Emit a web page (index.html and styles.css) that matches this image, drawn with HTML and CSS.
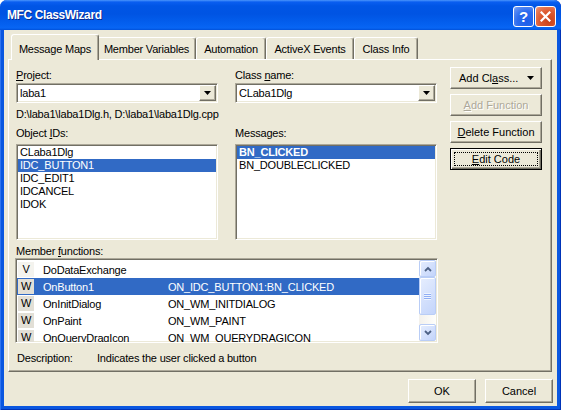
FILE: index.html
```html
<!DOCTYPE html>
<html lang="en">
<head>
    <meta charset="UTF-8">
    <meta name="viewport" content="width=device-width, initial-scale=1.0">
    <title>MFC ClassWizard</title>
    <link rel="stylesheet" href="styles.css">
</head>
<body>
    <div class="window">
        <div class="titlebar">
            <span class="title">MFC ClassWizard</span>
            <div class="title-buttons">
                <span class="tbtn help">?</span>
                <span class="tbtn close">
                    <svg width="11" height="11" viewBox="0 0 11 11"><path d="M1.5 1.5l8 8M9.5 1.5l-8 8" stroke="#fff" stroke-width="2.2" stroke-linecap="square"/></svg>
                </span>
            </div>
        </div>
        <div class="client">
            <div class="tabs">
                <div class="tab tab-msg active">Message Maps</div>
                <div class="tab tab-var">Member Variables</div>
                <div class="tab tab-auto">Automation</div>
                <div class="tab tab-ax">ActiveX Events</div>
                <div class="tab tab-info">Class Info</div>
            </div>
            <div class="panel">
                <div class="main">
                    <div class="cols">
                        <div class="field">
                            <div class="label"><u>P</u>roject:</div>
                            <div class="combo">
                                <span class="combo-text">laba1</span>
                                <span class="drop"><svg width="7" height="4" viewBox="0 0 7 4"><path d="M0 0h7L3.5 4z" fill="#000"/></svg></span>
                            </div>
                        </div>
                        <div class="field">
                            <div class="label">Class <u>n</u>ame:</div>
                            <div class="combo">
                                <span class="combo-text">CLaba1Dlg</span>
                                <span class="drop"><svg width="7" height="4" viewBox="0 0 7 4"><path d="M0 0h7L3.5 4z" fill="#000"/></svg></span>
                            </div>
                        </div>
                    </div>
                    <div class="path">D:\laba1\laba1Dlg.h, D:\laba1\laba1Dlg.cpp</div>
                    <div class="cols lists">
                        <div class="field">
                            <div class="label">Object <u>I</u>Ds:</div>
                            <ul class="listbox">
                                <li>CLaba1Dlg</li>
                                <li class="selected">IDC_BUTTON1</li>
                                <li>IDC_EDIT1</li>
                                <li>IDCANCEL</li>
                                <li>IDOK</li>
                            </ul>
                        </div>
                        <div class="field">
                            <div class="label">Messages:</div>
                            <ul class="listbox">
                                <li class="selected bold">BN_CLICKED</li>
                                <li>BN_DOUBLECLICKED</li>
                            </ul>
                        </div>
                    </div>
                    <div class="label funcs-label">Member <u>f</u>unctions:</div>
                    <div class="listview">
                        <div class="rows">
                            <div class="row"><span class="icon icon-v">V</span><span class="fn">DoDataExchange</span><span class="map"></span></div>
                            <div class="row selected"><span class="icon">W</span><span class="fn">OnButton1</span><span class="map">ON_IDC_BUTTON1:BN_CLICKED</span></div>
                            <div class="row"><span class="icon">W</span><span class="fn">OnInitDialog</span><span class="map">ON_WM_INITDIALOG</span></div>
                            <div class="row"><span class="icon">W</span><span class="fn">OnPaint</span><span class="map">ON_WM_PAINT</span></div>
                            <div class="row"><span class="icon">W</span><span class="fn">OnQueryDragIcon</span><span class="map">ON_WM_QUERYDRAGICON</span></div>
                        </div>
                        <div class="scrollbar">
                            <div class="sb-btn"><svg width="8" height="6" viewBox="0 0 8 6"><path d="M1 5l3-3 3 3" fill="none" stroke="#4d6185" stroke-width="1.8"/></svg></div>
                            <div class="sb-thumb"><span class="grip"></span></div>
                            <div class="sb-track"></div>
                            <div class="sb-btn"><svg width="8" height="6" viewBox="0 0 8 6"><path d="M1 1l3 3 3-3" fill="none" stroke="#4d6185" stroke-width="1.8"/></svg></div>
                        </div>
                    </div>
                    <div class="desc"><span class="desc-label">Description:</span>Indicates the user clicked a button</div>
                </div>
                <div class="actions">
                    <button class="btn btn-add"><span>Add Cl<u>a</u>ss...</span><svg width="7" height="4" viewBox="0 0 7 4"><path d="M0 0h7L3.5 4z" fill="#000"/></svg></button>
                    <button class="btn" disabled><u>A</u>dd Function</button>
                    <button class="btn"><u>D</u>elete Function</button>
                    <button class="btn default"><span class="focus"><u>E</u>dit Code</span></button>
                </div>
            </div>
            <div class="footer">
                <button class="btn footer-btn">OK</button>
                <button class="btn footer-btn">Cancel</button>
            </div>
        </div>
    </div>
</body>
</html>
```

FILE: styles.css
```css
* {
    box-sizing: border-box;
}
body {
    margin: 0;
    font-family: "Liberation Sans", Arial, sans-serif;
    font-size: 11px;
    letter-spacing: -0.2px;
    color: #000;
    background: #fff;
}
.window {
    width: 561px;
    height: 410px;
    display: flex;
    flex-direction: column;
    background: #0a57e0;
    border-radius: 7px 7px 0 0;
    box-shadow: inset 1px 0 #2f74f0, inset -1px 0 #0034b8, inset 0 -1px #0034b8;
    overflow: hidden;
}
.titlebar {
    height: 30px;
    display: flex;
    justify-content: space-between;
    align-items: flex-start;
    padding: 6px 5px 0 7px;
    background: linear-gradient(#4b95fb 0, #0a5ef0 2px, #0055e5 6px, #0054e3 14px, #0460ef 24px, #0866f4 28px, #0051da 30px);
    border-radius: 7px 7px 0 0;
}
.title {
    margin-top: 2px;
    font-weight: bold;
    font-size: 12px;
    line-height: 15px;
    letter-spacing: -0.4px;
    color: #fff;
    text-shadow: 1px 1px #0b2a8c;
}
.title-buttons {
    display: flex;
    gap: 1px;
}
.tbtn {
    width: 21px;
    height: 21px;
    display: flex;
    align-items: center;
    justify-content: center;
    border: 1px solid #fff;
    border-radius: 3px;
    color: #fff;
    font-weight: bold;
    font-size: 15px;
    letter-spacing: 0;
}
.help {
    background: radial-gradient(circle at 70% 75%, #1d5ee9 0%, #2c6cee 50%, #5e8ff3 85%, #9cbaf7 100%);
}
.close {
    background: radial-gradient(circle at 70% 75%, #c8421a 0%, #dd5a30 50%, #e9805d 85%, #f3b39c 100%);
}

.client {
    flex: 1;
    margin: 0 4px 4px;
    background: #ece9d8;
}

/* tabs */
.tabs {
    display: flex;
    align-items: flex-end;
    height: 29px;
    padding-left: 9px;
}
.tab {
    height: 22px;
    padding-top: 5px;
    border: 1px solid;
    border-bottom: none;
    border-color: #fff #716f64 #fff #fff;
    border-radius: 3px 3px 0 0;
    box-shadow: inset -1px 0 #aca899;
    line-height: 13px;
    text-align: center;
    white-space: nowrap;
}
.tab.active {
    position: relative;
    z-index: 1;
    height: 26px;
    margin: 0 -2px -1px;
    padding-top: 8px;
    background: #ece9d8;
}
.tab-msg { width: 88px; }
.tab-var { width: 99px; }
.tab-auto { width: 70px; }
.tab-ax { width: 88px; }
.tab-info { width: 64px; }

/* panel */
.panel {
    display: flex;
    height: 313px;
    margin: 0 5px 0 4px;
    padding: 9px 0 0 7px;
    border: 1px solid;
    border-color: #fff #716f64 #716f64 #fff;
    box-shadow: inset -1px -1px #aca899;
}
.main {
    width: 421px;
}
.cols {
    display: flex;
    gap: 17px;
}
.field {
    width: 202px;
}
.label {
    line-height: 13px;
    white-space: nowrap;
}
.combo {
    display: flex;
    height: 20px;
    margin-top: 1px;
    padding: 1px;
    background: #fff;
    border: 1px solid;
    border-color: #aca899 #fff #fff #aca899;
    box-shadow: inset 1px 1px #716f64, inset -1px -1px #ece9d8;
}
.combo-text {
    flex: 1;
    padding-left: 2px;
    line-height: 16px;
}
.drop {
    width: 17px;
    display: flex;
    align-items: center;
    justify-content: center;
    background: #ece9d8;
    border: 1px solid;
    border-color: #fff #716f64 #716f64 #fff;
    box-shadow: inset -1px -1px #aca899;
}
.path {
    margin-top: 5px;
    line-height: 13px;
}
.lists {
    margin-top: 6px;
}
.listbox {
    list-style: none;
    height: 96px;
    margin: 4px 0 0;
    padding: 1px;
    background: #fff;
    border: 1px solid;
    border-color: #aca899 #fff #fff #aca899;
    box-shadow: inset 1px 1px #716f64, inset -1px -1px #ece9d8;
    overflow: hidden;
}
.listbox li {
    padding-left: 2px;
    line-height: 13px;
}
.listbox li.selected {
    background: #316ac5;
    color: #fff;
}
.listbox li.bold {
    font-weight: bold;
}
.funcs-label {
    margin-top: 5px;
}

/* member functions list */
.listview {
    display: flex;
    width: 423px;
    height: 85px;
    margin-left: -1px;
    padding: 1px;
    background: #fff;
    border: 1px solid;
    border-color: #aca899 #fff #fff #aca899;
    box-shadow: inset 1px 1px #716f64, inset -1px -1px #ece9d8;
    overflow: hidden;
}
.rows {
    flex: 1;
    padding-top: 1px;
}
.row {
    display: flex;
    align-items: center;
    height: 17px;
    white-space: nowrap;
}
.row.selected {
    background: #316ac5;
    color: #fff;
}
.icon {
    width: 16px;
    height: 15px;
    margin-left: 1px;
    background: #e2dfd6;
    color: #000;
    line-height: 15px;
    text-align: center;
}
.icon-v {
    background: #f4f3ee;
}
.fn {
    width: 125px;
    margin-left: 9px;
}
.scrollbar {
    width: 17px;
    display: flex;
    flex-direction: column;
    background: linear-gradient(90deg, #f3f1ec, #fefefb);
}
.sb-btn,
.sb-thumb {
    display: flex;
    align-items: center;
    justify-content: center;
    border: 1px solid #b9cdf6;
    border-radius: 2px;
    background: linear-gradient(135deg, #e6eefe, #c3d4fb);
    box-shadow: inset 1px 1px #fff;
}
.sb-btn {
    height: 17px;
}
.sb-thumb {
    height: 38px;
}
.grip {
    width: 7px;
    height: 7px;
    background: repeating-linear-gradient(#eef4fe 0 1px, #8eadf5 1px 2px);
}
.sb-track {
    flex: 1;
}
.desc {
    margin-top: 9px;
    padding-left: 1px;
    line-height: 13px;
    white-space: nowrap;
}
.desc-label {
    display: inline-block;
    width: 80px;
}

/* buttons */
.actions {
    width: 92px;
    margin: -2px 0 0 13px;
    display: flex;
    flex-direction: column;
    gap: 5px;
}
.btn {
    height: 22px;
    padding: 0;
    font: inherit;
    color: #000;
    background: #ece9d8;
    border: 1px solid;
    border-color: #fff #716f64 #716f64 #fff;
    box-shadow: inset -1px -1px #aca899;
    white-space: nowrap;
}
.btn:disabled {
    color: #aca899;
    text-shadow: 1px 1px #fff;
}
.btn-add {
    display: flex;
    align-items: center;
    justify-content: space-between;
    padding: 0 7px 0 8px;
}
.btn.default {
    display: flex;
    padding: 3px;
    border-color: #000;
    box-shadow: inset 1px 1px #fff, inset -1px -1px #716f64, inset -2px -2px #aca899;
}
.focus {
    flex: 1;
    display: flex;
    align-items: center;
    justify-content: center;
    border: 1px dotted #000;
}
.footer {
    display: flex;
    justify-content: flex-end;
    gap: 9px;
    padding: 7px 4px 0 0;
}
.footer-btn {
    width: 68px;
    height: 24px;
}
```
